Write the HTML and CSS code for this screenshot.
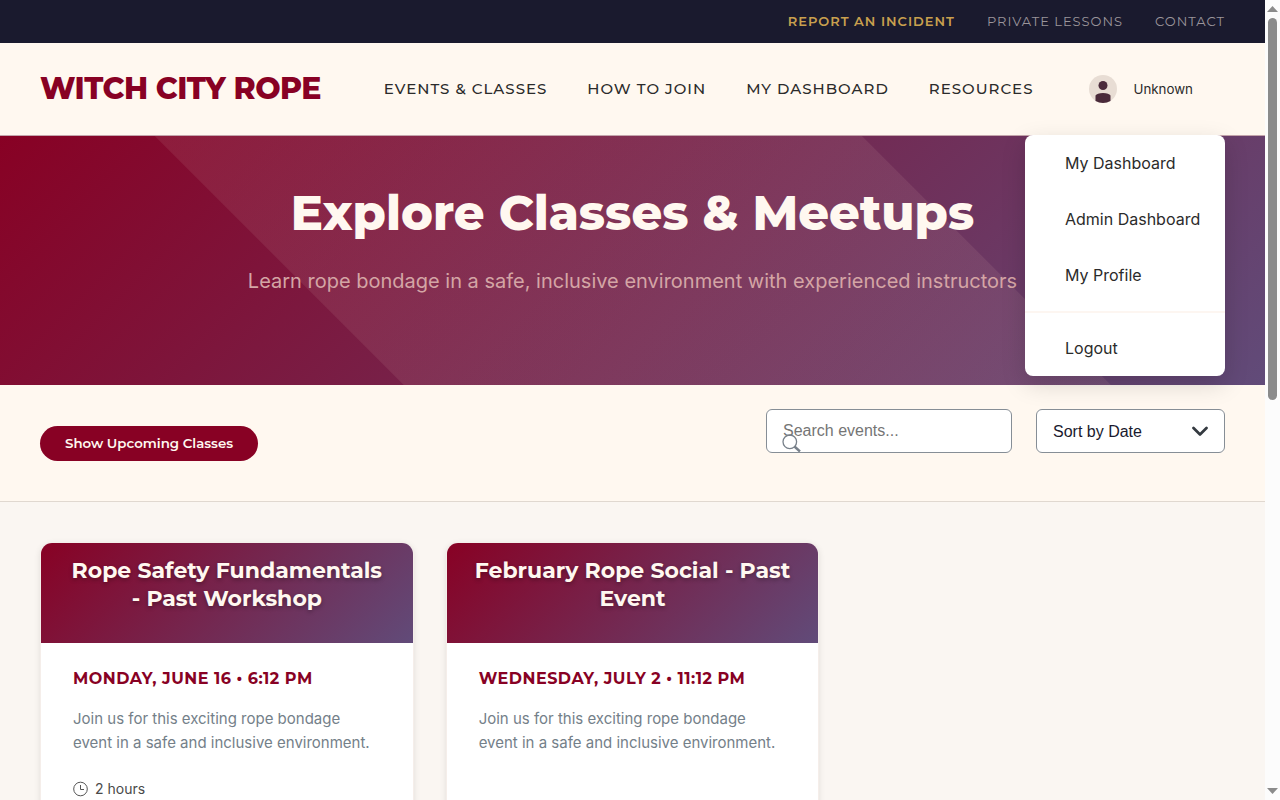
FILE: index.html
```html
<!DOCTYPE html>
<html lang="en">
<head>
<meta charset="utf-8">
<meta name="viewport" content="width=device-width, initial-scale=1">
<title>Witch City Rope - Classes &amp; Meetups</title>
<link rel="stylesheet" href="styles.css">
</head>
<body>
<div class="viewport">
  <div class="page">
    <nav class="utility-bar" aria-label="Utility">
      <a class="utility-link utility-alert" href="#">Report an Incident</a>
      <a class="utility-link" href="#">Private Lessons</a>
      <a class="utility-link" href="#">Contact</a>
    </nav>

    <header class="header">
      <a class="logo" href="#">WITCH CITY ROPE</a>
      <nav class="nav" aria-label="Main">
        <a class="nav-link" href="#">Events &amp; Classes</a>
        <a class="nav-link" href="#">How to Join</a>
        <a class="nav-link" href="#">My Dashboard</a>
        <a class="nav-link" href="#">Resources</a>
        <button class="user-button" type="button" aria-expanded="true">
          <svg class="avatar" viewBox="0 0 28 28" aria-hidden="true">
            <circle cx="14" cy="14" r="14" fill="#e8ddd4"/>
            <circle cx="14" cy="10.500" r="4.500" fill="#4a2a3a"/>
            <path d="M6.500 20.500Q8 18 14 18T21.500 20.500V26Q18 28 14 28T6.500 26Z" fill="#4a2a3a"/>
          </svg>
          <span>Unknown</span>
        </button>
      </nav>
      <div class="user-menu">
        <a class="menu-item" href="#">My Dashboard</a>
        <a class="menu-item" href="#">Admin Dashboard</a>
        <a class="menu-item" href="#">My Profile</a>
        <hr class="menu-divider">
        <button class="menu-item" type="button">Logout</button>
      </div>
    </header>

    <section class="hero">
      <h1 class="hero-title">Explore Classes &amp; Meetups</h1>
      <p class="hero-text">Learn rope bondage in a safe, inclusive environment with experienced instructors</p>
    </section>

    <section class="filters">
      <button class="toggle-button" type="button">Show Upcoming Classes</button>
      <div class="filter-fields">
        <div class="search">
          <input class="field search-input" type="text" placeholder="Search events..." aria-label="Search events">
          <svg class="search-icon" viewBox="0 0 20 20" aria-hidden="true">
            <circle cx="7.800" cy="8.800" r="6.800" fill="none" stroke="#78808a" stroke-width="1.300"/>
            <path d="M12.500 13.500l5.500 5" fill="none" stroke="#78808a" stroke-width="2.400"/>
          </svg>
        </div>
        <div class="sort">
          <select class="field sort-select" aria-label="Sort events">
            <option>Sort by Date</option>
          </select>
          <svg class="sort-icon" viewBox="0 0 16 16" aria-hidden="true">
            <path d="M1.500 5l6.500 6.500 6.500-6.500" fill="none" stroke="#343a40" stroke-width="2.700" stroke-linecap="round" stroke-linejoin="round"/>
          </svg>
        </div>
      </div>
    </section>

    <main class="events">
      <article class="card">
        <div class="card-head"><h2 class="card-title">Rope Safety Fundamentals - Past Workshop</h2></div>
        <div class="card-body">
          <p class="card-date">Monday, June 16 • 6:12 PM</p>
          <p class="card-text">Join us for this exciting rope bondage event in a safe and inclusive environment.</p>
          <p class="card-meta">
            <svg class="clock" viewBox="0 0 16 16" aria-hidden="true">
              <circle cx="7.500" cy="8" r="6.800" fill="none" stroke="#555" stroke-width="1"/>
              <path d="M7.500 4v4.500h3.500" fill="none" stroke="#555" stroke-width="1"/>
            </svg>
            2 hours
          </p>
        </div>
      </article>
      <article class="card">
        <div class="card-head"><h2 class="card-title">February Rope Social - Past Event</h2></div>
        <div class="card-body">
          <p class="card-date">Wednesday, July 2 • 11:12 PM</p>
          <p class="card-text">Join us for this exciting rope bondage event in a safe and inclusive environment.</p>
        </div>
      </article>
    </main>
  </div>

  <div class="scrollbar" aria-hidden="true">
    <svg class="scroll-arrow" viewBox="0 0 15 18"><path d="M2 12l5.500-6 5.500 6z" fill="#8b8b8b"/></svg>
    <div class="scroll-track"><div class="scroll-thumb"></div></div>
    <svg class="scroll-arrow" viewBox="0 0 15 18"><path d="M2 6l5.500 6 5.500-6z" fill="#8b8b8b"/></svg>
  </div>
</div>
</body>
</html>
```
FILE: styles.css
```css
:root {
  --burgundy: #880124;
  --plum: #614b79;
  --ivory: #fff8f0;
  --charcoal: #2b2b2b;
  --display: Montserrat, Inter, sans-serif;
  --text: Inter, sans-serif;
}

* { box-sizing: border-box; }

body {
  margin: 0;
  font-family: var(--text);
  color: var(--charcoal);
  background: #faf6f2;
}

h1, h2, p { margin: 0; }
a { color: inherit; text-decoration: none; }
button { border: 0; font-family: inherit; color: inherit; cursor: pointer; }

.viewport { display: flex; height: 100vh; overflow: hidden; }
.page { flex: 1; min-width: 0; overflow: hidden; }

.utility-bar {
  display: flex;
  justify-content: flex-end;
  gap: 32px;
  padding: 11px 40px 12px;
  background: #1a1a2e;
  font: 400 13px/20px var(--display);
  letter-spacing: 1px;
  text-transform: uppercase;
  color: #9a959b;
}
.utility-alert { color: #c9a04e; font-weight: 600; }

.header {
  position: relative;
  z-index: 2;
  display: flex;
  align-items: center;
  justify-content: space-between;
  padding: 24px 40px;
  background: var(--ivory);
  border-bottom: 1px solid #c4a5ac;
}
.logo {
  font: 800 30px/44px var(--display);
  letter-spacing: -0.5px;
  color: var(--burgundy);
}
.nav { display: flex; align-items: center; gap: 40px; padding-right: 32px; }
.nav-link {
  font: 500 15px/24px var(--display);
  letter-spacing: 1px;
  text-transform: uppercase;
}
.user-button {
  display: flex;
  align-items: center;
  gap: 16px;
  margin-left: 16px;
  padding: 0;
  background: none;
  line-height: 20px;
}
.avatar { width: 28px; height: 28px; }

.user-menu {
  position: absolute;
  top: 100%;
  right: 40px;
  width: 200px;
  border-radius: 8px;
  background: #fff;
  box-shadow: 0 8px 24px rgba(0, 0, 0, 0.15);
}
.menu-item {
  display: block;
  padding: 16px 0 16px 40px;
  background: none;
  font-size: 16px;
  line-height: 24px;
  white-space: nowrap;
}
.menu-divider { margin: 8px 0 7px; border: 0; border-top: 2px solid #fdf6f1; }

.hero {
  padding: 48px 40px 87px;
  text-align: center;
  background:
    linear-gradient(45deg, transparent 0, transparent 285px, rgba(212, 165, 165, 0.12) 286px, rgba(212, 165, 165, 0.12) 785px, transparent 786px),
    linear-gradient(135deg, var(--burgundy), var(--plum));
}
.hero-title { font: 800 48px/58px var(--display); color: var(--ivory); }
.hero-text { margin-top: 22px; font-size: 20px; line-height: 34px; color: #d4a5a5; }

.filters {
  display: flex;
  align-items: center;
  justify-content: space-between;
  padding: 24px 40px;
  background: var(--ivory);
  border-bottom: 1px solid #e0d8d0;
}
.toggle-button {
  padding: 8px 25px;
  border-radius: 18px;
  background: var(--burgundy);
  color: var(--ivory);
  font-family: var(--display);
  font-weight: 600;
  line-height: 19px;
}
.filter-fields { display: flex; align-items: flex-start; gap: 24px; padding-bottom: 24px; }
.search, .sort { position: relative; }
.field {
  display: block;
  height: 44px;
  padding: 0 16px;
  border: 1px solid #868e96;
  border-radius: 6px;
  background: #fff;
  color: #1a1a2e;
  font: 16px "Liberation Sans", sans-serif;
}
.search-input { width: 246px; }
.search-input::placeholder { color: #757575; }
.search-icon { position: absolute; left: 16px; bottom: 0; width: 20px; height: 20px; }
.sort-select { width: 189px; appearance: none; }
.sort-icon { position: absolute; right: 17px; top: 14px; width: 16px; height: 16px; pointer-events: none; }

.events {
  display: grid;
  grid-template-columns: repeat(3, 1fr);
  gap: 32px;
  padding: 40px;
}
.card {
  overflow: hidden;
  min-height: 400px;
  border: 1px solid #f5eeea;
  border-radius: 12px;
  background: #fff;
  box-shadow: 0 2px 6px rgba(0, 0, 0, 0.1);
}
.card-head {
  height: 100px;
  padding: 14px 24px;
  background: linear-gradient(135deg, var(--burgundy), var(--plum));
}
.card-title {
  font: 700 22px/28px var(--display);
  text-align: center;
  color: var(--ivory);
  text-shadow: 0 2px 4px rgba(0, 0, 0, 0.3);
}
.card-body { padding: 24px 32px; }
.card-date {
  font: 700 16px/24px var(--display);
  letter-spacing: 0.5px;
  text-transform: uppercase;
  color: var(--burgundy);
}
.card-text { margin-top: 16px; font-size: 15px; line-height: 24px; color: #748089; }
.card-meta {
  display: flex;
  align-items: center;
  gap: 6px;
  margin-top: 24px;
  font-size: 14px;
  line-height: 20px;
  color: #4a4a4a;
}
.clock { width: 16px; height: 16px; }

.scrollbar { display: flex; flex: none; flex-direction: column; width: 15px; background: #fcfcfc; }
.scroll-arrow { width: 15px; height: 18px; }
.scroll-track { flex: 1; padding: 0 3px; }
.scroll-thumb { height: 50%; border-radius: 5px; background: #8b8b8b; }
```
